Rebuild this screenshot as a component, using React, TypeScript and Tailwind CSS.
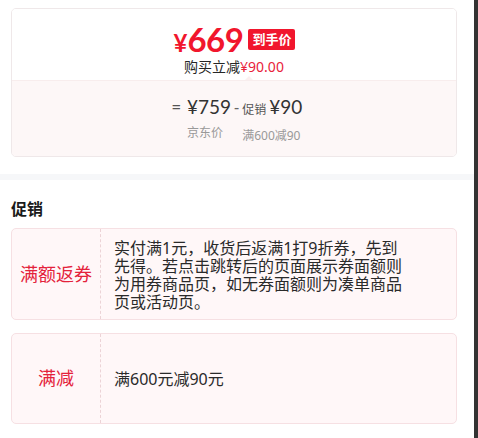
import React from "react";

const cjk = { fontFamily: '"Noto Sans", "Noto Sans CJK SC", sans-serif' };
const num = { fontFamily: 'Lato, "Noto Sans CJK SC", sans-serif' };

export default function App() {
  return (
    <div className="flex h-[438px] w-[478px] overflow-hidden bg-white" style={cjk}>
      <div className="flex-1 flex flex-col">
        {/* price card */}
        <div className="ml-[11px] mt-[8px] w-[446px] rounded-[5px] border border-[#efe8e9] overflow-hidden">
          <div className="relative h-[71px] bg-white flex flex-col items-center">
            <div className="flex items-center mt-[14px] h-[32px] ml-[1px]">
              <span className="text-[#f1162d] font-bold leading-none flex items-baseline" style={num}>
                <span className="text-[24px]">¥</span>
                <span className="text-[33px] tracking-[-0.5px]">669</span>
              </span>
              <span className="ml-[5px] h-[21px] px-[4px] rounded-[2px] bg-[#f1162d] text-white text-[13px] font-bold leading-[21px]" style={cjk}>
                到手价
              </span>
            </div>
            <div className="mt-[3px] text-[14px] leading-[18px] text-[#262626]">
              购买立减<span className="text-[#e8223a]">¥90.00</span>
            </div>
            <div className="absolute bottom-0 left-[233px] w-0 h-0 border-l-[4px] border-r-[4px] border-b-[4px] border-l-transparent border-r-transparent border-b-[#fbf0f0]" />
          </div>
          <div className="h-[76px] bg-[#fdf7f7] border-t border-[#f8eded] flex justify-center">
            <div className="flex items-start mt-[13px] ml-[6px]">
              <span className="text-[16px] leading-[26px] text-[#555] mr-[6px]">=</span>
              <div className="flex flex-col">
                <span className="text-[19px] leading-[26px] text-[#333]" style={num}>¥759</span>
                <span className="text-[12px] leading-[18px] mt-[4px] text-[#999]">京东价</span>
              </div>
              <span className="text-[16px] leading-[26px] text-[#666] mx-[3px]">-</span>
              <div className="flex flex-col">
                <span className="leading-[26px] text-[#333] flex items-baseline">
                  <span className="text-[12px] text-[#555] mr-[3px]">促销</span>
                  <span className="text-[19px]" style={num}>¥90</span>
                </span>
                <span className="text-[12px] leading-[18px] mt-[4px] text-[#999]">满600减90</span>
              </div>
            </div>
          </div>
        </div>

        <div className="mt-[17px] h-[6px] bg-[#f6f7f9]" />

        <div className="ml-[11px] mt-[17px] text-[16px] leading-[24px] font-bold text-[#1a1a1a]">促销</div>

        <div className="ml-[11px] mt-[7px] w-[446px] min-h-[91px] flex rounded-[5px] border border-[#f6e0e3] bg-[#fff7f8]">
          <div className="w-[89px] flex items-center justify-center text-[18px] text-[#e4223b] border-r border-dashed border-[#ecd3d6]">
            满额返券
          </div>
          <div className="flex items-center pl-[13px] pt-[10px] pb-[8px]">
            <p className="w-[292px] text-[16px] leading-[18px] text-[#2a2a2a]">
              实付满1元，收货后返满1打9折券，先到先得。若点击跳转后的页面展示券面额则为用券商品页，如无券面额则为凑单商品页或活动页。
            </p>
          </div>
        </div>

        <div className="ml-[11px] mt-[13px] w-[446px] min-h-[91px] flex rounded-[5px] border border-[#f6e0e3] bg-[#fff7f8]">
          <div className="w-[89px] flex items-center justify-center text-[18px] text-[#e4223b] border-r border-dashed border-[#ecd3d6]">
            满减
          </div>
          <div className="flex items-center pl-[13px]">
            <span className="text-[16px] leading-[18px] text-[#2a2a2a]">满600元减90元</span>
          </div>
        </div>
      </div>
      <div className="w-[4px] h-full bg-[#333333]" />
    </div>
  );
}
